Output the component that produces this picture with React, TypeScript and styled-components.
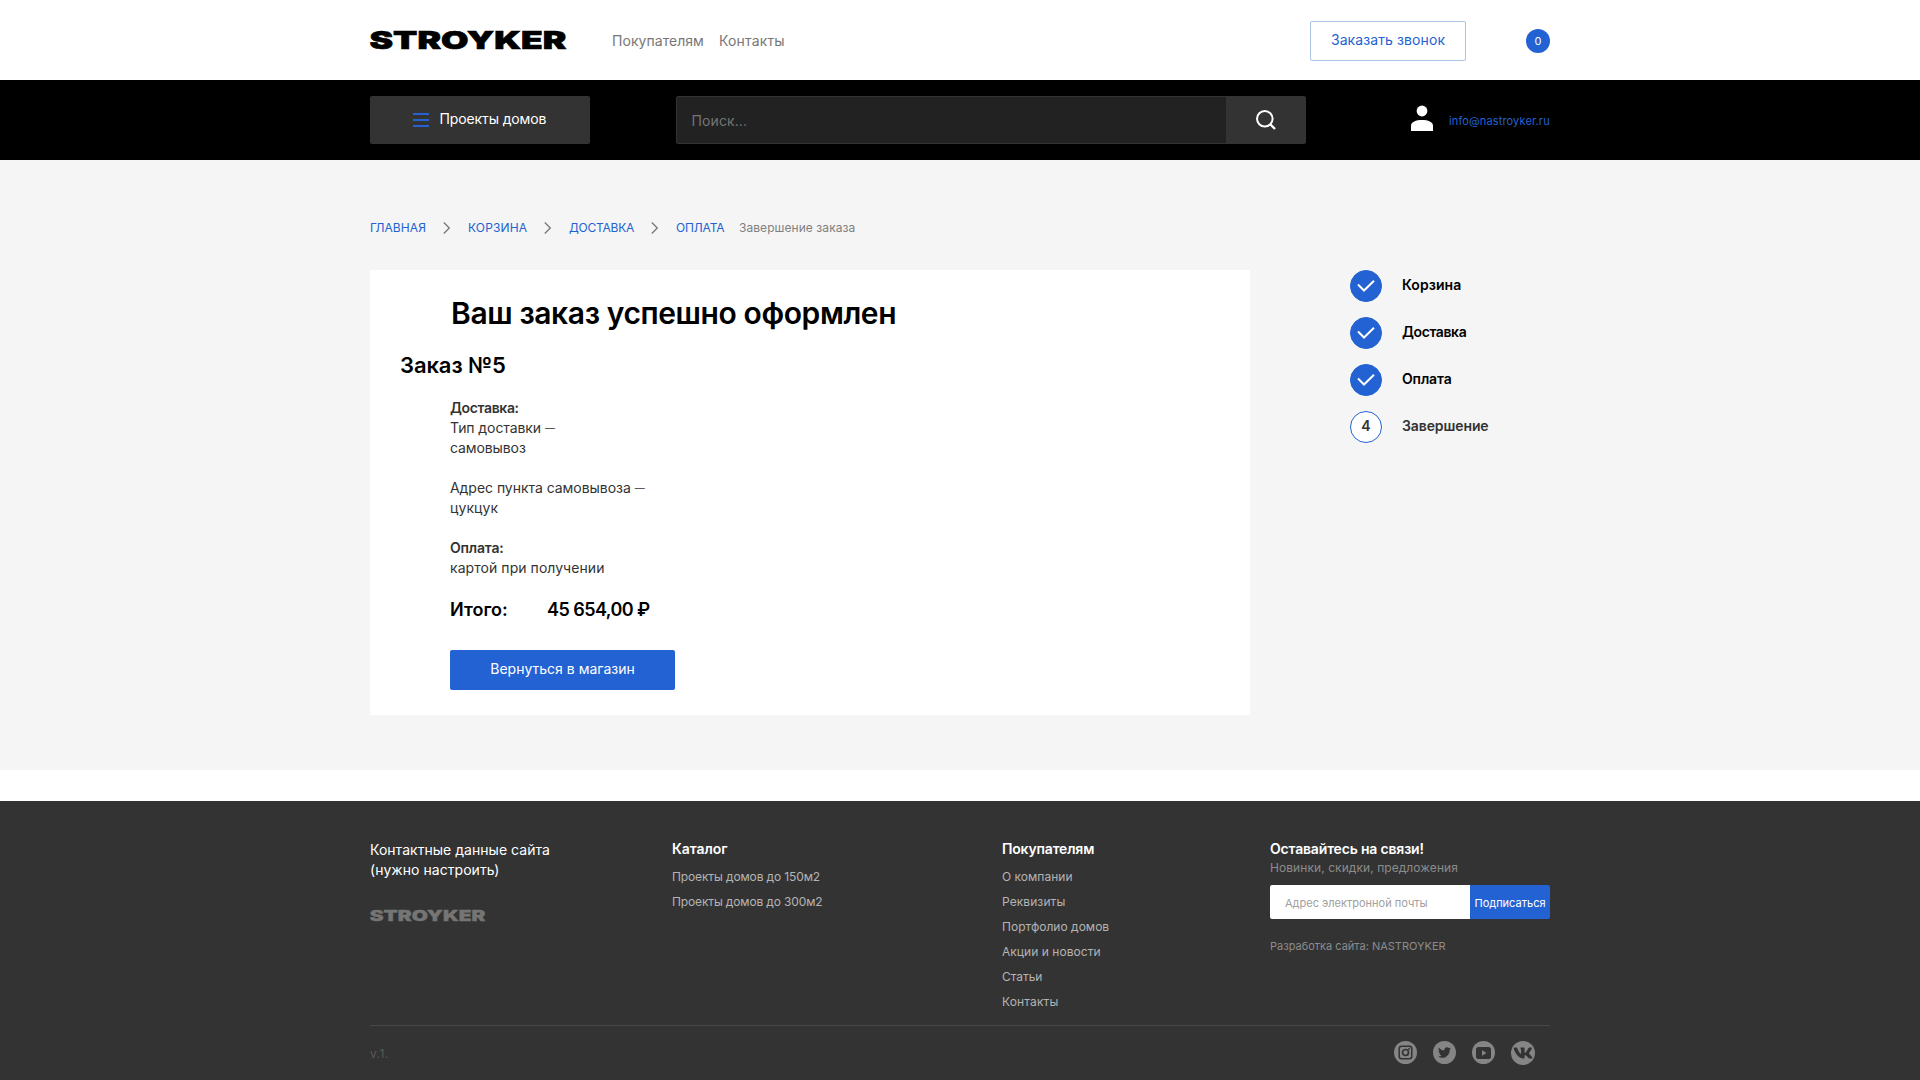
import React from 'react';
import styled, { createGlobalStyle } from 'styled-components';
import { FaTwitter, FaVk } from 'react-icons/fa';

const BLUE = '#2362d2';

const GlobalStyle = createGlobalStyle`
  * { box-sizing: border-box; }
  body { margin: 0; background: #fff; font: 400 14px/20px Inter, 'Noto Sans', sans-serif; color: #333; }
  a { color: inherit; text-decoration: none; }
  button, input { font: inherit; }
  h1, h2, h3, p, ul { margin: 0; padding: 0; list-style: none; }
`;

const Text = styled.span<{ $track?: number }>`
  letter-spacing: ${p => p.$track ?? 0}px;
  white-space: nowrap;
`;

const Page = styled.div`
  height: 1080px;
  overflow: hidden;
  display: flex;
  flex-direction: column;
`;
const Container = styled.div`
  width: 1180px;
  margin: 0 auto;
  display: flex;
`;

/* Header */
const TopRow = styled(Container)`
  height: 80px;
  padding-top: 2px;
  align-items: center;
`;
const LogoSvg = styled.svg`
  display: block;
  flex: none;
  overflow: visible;
  margin-bottom: 1px;
`;
const Nav = styled.nav`
  display: flex;
  gap: 15px;
  margin-left: 46px;
  color: #777;
`;
const CallButton = styled.button`
  width: 156px;
  height: 40px;
  margin-left: auto;
  padding: 0 0 2px;
  border: 1px solid #aac3e6;
  border-radius: 2px;
  background: #fff;
  color: ${BLUE};
`;
const CartCount = styled.span`
  width: 24px;
  height: 24px;
  margin-left: 60px;
  border-radius: 50%;
  background: ${BLUE};
  color: #fff;
  font-size: 11px;
  line-height: 24px;
  text-align: center;
`;

const Bar = styled.div`
  background: #000;
`;
const BarRow = styled(Container)`
  height: 80px;
  align-items: center;
`;
const CatalogButton = styled.button`
  display: flex;
  align-items: center;
  gap: 10.5px;
  width: 220px;
  height: 48px;
  padding: 0 0 0 43px;
  border: 0;
  border-radius: 2px;
  background: #333;
  color: #fff;
`;
const CatalogLabel = styled(Text)`
  padding-bottom: 2px;
`;
const Burger = styled.span`
  width: 16px;
  height: 14px;
  border: solid ${BLUE};
  border-width: 2px 0;
  display: flex;
  align-items: center;
  &::before { content: ''; width: 16px; height: 2px; background: ${BLUE}; }
`;
const Search = styled.form`
  display: flex;
  width: 630px;
  height: 48px;
  margin-left: 86px;
  border: 1px solid #333;
  border-radius: 2px;
  background: #333;
`;
const SearchInput = styled.input`
  width: 549px;
  padding: 2px 15px 0 14.5px;
  border: 0;
  background: #222;
  color: #fff;
  letter-spacing: 0.1px;
  outline: 0;
  &::placeholder { color: #757575; opacity: 1; }
`;
const SearchButton = styled.button`
  flex: 1;
  display: flex;
  align-items: center;
  justify-content: center;
  padding: 0 0 1px;
  border: 0;
  background: transparent;
`;
const Account = styled.a`
  display: flex;
  margin-left: 105px;
  padding-bottom: 4px;
`;
const Email = styled.a`
  margin-left: 16px;
  padding-top: 1px;
  color: ${BLUE};
  font-size: 11px;
`;

/* Main */
const Main = styled.main`
  height: 610px;
  background: #f5f5f5;
`;
const Crumbs = styled(Container)`
  height: 110px;
  padding-top: 59px;
  font-size: 12px;
  line-height: 18px;
  color: #808080;
`;
const Crumb = styled.a<{ $width: number }>`
  width: ${p => p.$width}px;
  color: ${BLUE};
`;
const Chevron = styled.svg`
  margin: 3px 17px 0 0;
  flex: none;
`;
const Columns = styled(Container)`
  align-items: flex-start;
  gap: 100px;
`;
const Card = styled.section`
  width: 880px;
  height: 445px;
  padding: 23px 0 0 80px;
  background: #fff;
`;
const Title = styled.h1`
  padding-left: 1px;
  color: #000;
  font-size: 30px;
  line-height: 40px;
  font-weight: 600;
`;
const OrderTitle = styled.h2`
  margin: 17px 0 0 -50px;
  color: #000;
  font-size: 22px;
  line-height: 30px;
  font-weight: 600;
`;
const Info = styled.div`
  display: flex;
  flex-direction: column;
  gap: 20px;
  margin-top: 18px;
`;
const InfoBlock = styled.div`
  display: flex;
  flex-direction: column;
`;
const Strong = styled(Text)`
  font-weight: 600;
`;
const Dash = styled.span`
  font-size: 10px;
  line-height: 1;
  vertical-align: 1px;
`;
const Total = styled.div`
  display: flex;
  margin-top: 19px;
  color: #000;
  font-size: 18px;
  line-height: 26px;
  font-weight: 600;
`;
const TotalLabel = styled.div`
  width: 97px;
`;
const BackButton = styled.button`
  display: block;
  width: 225px;
  height: 40px;
  margin-top: 27px;
  padding: 0 0 2px;
  border: 0;
  border-radius: 2px;
  background: ${BLUE};
  color: #fff;
`;
const Steps = styled.ul`
  display: flex;
  flex-direction: column;
  gap: 15px;
`;
const Step = styled.li<{ $current?: boolean }>`
  display: flex;
  gap: 20px;
  height: 32px;
  line-height: 30px;
  font-weight: 600;
  color: ${p => (p.$current ? '#333' : '#000')};
`;
const StepMark = styled.span<{ $current?: boolean }>`
  display: flex;
  align-items: center;
  justify-content: center;
  width: 32px;
  height: 32px;
  border: 1px solid ${BLUE};
  border-radius: 50%;
  background: ${p => (p.$current ? '#fff' : BLUE)};
  padding-bottom: ${p => (p.$current ? 2 : 0)}px;
`;

/* Footer */
const Footer = styled.footer`
  flex: 1;
  margin-top: 31px;
  background: #333;
`;
const FooterTop = styled.div`
  display: grid;
  grid-template-columns: 302px 330px 268px 280px;
  width: 1180px;
  height: 225px;
  margin: 0 auto;
  padding-top: 38px;
  border-bottom: 1px solid #484848;
`;
const Contacts = styled.div`
  display: flex;
  flex-direction: column;
  padding-top: 1px;
  color: #fff;
`;
const FooterLogo = styled.div`
  margin-top: 30px;
`;
const FooterHeading = styled.h3`
  color: #fff;
  font-size: 14px;
  line-height: 20px;
  font-weight: 600;
`;
const Links = styled.ul`
  margin-top: 5px;
  color: #b3b3b3;
  font-size: 12px;
  line-height: 25px;
`;
const Note = styled.p`
  color: #8c8c8c;
  font-size: 12px;
  line-height: 18px;
`;
const Subscribe = styled.form`
  display: flex;
  height: 34px;
  margin-top: 8px;
  border-radius: 2px;
  overflow: hidden;
`;
const EmailInput = styled.input`
  width: 200px;
  padding: 2px 10px 0 15px;
  border: 0;
  background: #fff;
  font-size: 11px;
  &::placeholder { color: #a0a0a0; opacity: 1; }
`;
const SubscribeButton = styled.button`
  width: 80px;
  padding: 2px 0 0;
  border: 0;
  background: ${BLUE};
  color: #fff;
  font-size: 11px;
`;
const Developer = styled.p`
  margin-top: 19px;
  color: #8c8c8c;
  font-size: 11px;
  line-height: 16px;
`;
const FooterBottom = styled(Container)`
  justify-content: space-between;
  padding: 15px 15px 0 0;
`;
const Version = styled.div`
  padding-top: 4px;
  color: #595959;
  font-size: 12px;
  line-height: 18px;
`;
const Social = styled.div`
  display: flex;
  gap: 16px;
`;
const SocialLink = styled.a<{ $size?: number }>`
  display: flex;
  align-items: center;
  justify-content: center;
  width: ${p => p.$size ?? 23}px;
  height: ${p => p.$size ?? 23}px;
  border-radius: 50%;
  background: #858585;
  color: #333;
`;

const Logo = ({ width, height, color }: { width: number; height: number; color: string }) => (
  <LogoSvg width={width} height={height} viewBox="0 0 196 19" preserveAspectRatio="none">
    <text x="-0.5" y="18.3" textLength="197" lengthAdjust="spacingAndGlyphs" stroke={color} strokeWidth="0.6"
      fontFamily="Inter, sans-serif" fontWeight="900" fontSize="24.5" fill={color}>STROYKER</text>
  </LogoSvg>
);

const crumbs: [string, number, number][] = [
  ['ГЛАВНАЯ', 73, 0.1],
  ['КОРЗИНА', 76, 0.16],
  ['ДОСТАВКА', 82, -0.25],
  ['ОПЛАТА', 63, -0.15],
];
const steps: [string, number][] = [['Корзина', 0.05], ['Доставка', -0.4], ['Оплата', -0.15]];
const catalog: [string, number][] = [['Проекты домов до 150м2', -0.12], ['Проекты домов до 300м2', -0.14]];
const customers: [string, number][] = [
  ['О компании', 0.02], ['Реквизиты', 0.08], ['Портфолио домов', 0.02],
  ['Акции и новости', 0.04], ['Статьи', -0.05], ['Контакты', 0.14],
];

const LinkList = ({ items }: { items: [string, number][] }) => (
  <Links>
    {items.map(([label, track]) => (
      <li key={label}><a href="#"><Text $track={track}>{label}</Text></a></li>
    ))}
  </Links>
);

export default function App() {
  return (
    <Page>
      <GlobalStyle />
      <header>
        <TopRow>
          <Logo width={196} height={19} color="#000" />
          <Nav>
            <a href="#"><Text $track={0.05}>Покупателям</Text></a>
            <a href="#"><Text $track={0.16}>Контакты</Text></a>
          </Nav>
          <CallButton><Text $track={0.1}>Заказать звонок</Text></CallButton>
          <CartCount>0</CartCount>
        </TopRow>
        <Bar>
          <BarRow>
            <CatalogButton>
              <Burger />
              <CatalogLabel $track={-0.12}>Проекты домов</CatalogLabel>
            </CatalogButton>
            <Search>
              <SearchInput placeholder="Поиск..." />
              <SearchButton type="button" aria-label="Поиск">
                <svg width="20" height="20" viewBox="0 0 20 20" fill="none" stroke="#fff" strokeWidth="2">
                  <circle cx="8.8" cy="8.8" r="7.8" />
                  <path d="M14 14l5 5" strokeWidth="2.4" />
                </svg>
              </SearchButton>
            </Search>
            <Account href="#" aria-label="Профиль">
              <svg width="22" height="26" viewBox="0 0 22 26" fill="#fff">
                <circle cx="11" cy="6" r="5.4" />
                <path d="M0 26v-5.5C0 17 5 15 11 15s11 2 11 5.500V26z" />
              </svg>
            </Account>
            <Email href="#"><Text $track={0.14}>info@nastroyker.ru</Text></Email>
          </BarRow>
        </Bar>
      </header>

      <Main>
        <Crumbs>
          {crumbs.map(([label, width, track], i) => (
            <React.Fragment key={label}>
              <Crumb href="#" $width={width}><Text $track={track}>{label}</Text></Crumb>
              {i < 3 && (
                <Chevron width="8" height="12" viewBox="0 0 8 12" fill="none" stroke="#777" strokeWidth="1.3">
                  <path d="M0.8 0.5L6.300 6L0.8 11.500" />
                </Chevron>
              )}
            </React.Fragment>
          ))}
          <Text $track={0.06}>Завершение заказа</Text>
        </Crumbs>
        <Columns>
          <Card>
            <Title><Text $track={-0.4}>Ваш заказ успешно оформлен</Text></Title>
            <OrderTitle><Text $track={-0.1}>Заказ №5</Text></OrderTitle>
            <Info>
              <InfoBlock>
                <Strong $track={-0.36}>Доставка:</Strong>
                <Text $track={-0.08}>Тип доставки <Dash>—</Dash></Text>
                <Text $track={-0.1}>самовывоз</Text>
              </InfoBlock>
              <InfoBlock>
                <Text $track={-0.04}>Адрес пункта самовывоза <Dash>—</Dash></Text>
                <Text $track={0.1}>цукцук</Text>
              </InfoBlock>
              <InfoBlock>
                <Strong $track={-0.18}>Оплата:</Strong>
                <Text $track={0.06}>картой при получении</Text>
              </InfoBlock>
            </Info>
            <Total>
              <TotalLabel><Text>Итого:</Text></TotalLabel>
              <Text $track={-0.55}>45 654,00 ₽</Text>
            </Total>
            <BackButton><Text>Вернуться в магазин</Text></BackButton>
          </Card>
          <Steps>
            {steps.map(([label, track]) => (
              <Step key={label}>
                <StepMark>
                  <svg width="18" height="12" viewBox="0 0 18 12" fill="none" stroke="#fff" strokeWidth="2">
                    <path d="M1 4.500L7 10.500L17 0.8" />
                  </svg>
                </StepMark>
                <Text $track={track}>{label}</Text>
              </Step>
            ))}
            <Step $current>
              <StepMark $current>4</StepMark>
              <Text $track={-0.1}>Завершение</Text>
            </Step>
          </Steps>
        </Columns>
      </Main>

      <Footer>
        <FooterTop>
          <Contacts>
            <Text $track={0.03}>Контактные данные сайта</Text>
            <Text $track={0.04}>(нужно настроить)</Text>
            <FooterLogo><Logo width={115} height={11} color="#757575" /></FooterLogo>
          </Contacts>
          <div>
            <FooterHeading><Text $track={-0.05}>Каталог</Text></FooterHeading>
            <LinkList items={catalog} />
          </div>
          <div>
            <FooterHeading><Text $track={-0.18}>Покупателям</Text></FooterHeading>
            <LinkList items={customers} />
          </div>
          <div>
            <FooterHeading><Text $track={-0.18}>Оставайтесь на связи!</Text></FooterHeading>
            <Note><Text $track={0.07}>Новинки, скидки, предложения</Text></Note>
            <Subscribe>
              <EmailInput placeholder="Адрес электронной почты" />
              <SubscribeButton type="button"><Text>Подписаться</Text></SubscribeButton>
            </Subscribe>
            <Developer><Text>Разработка сайта: NASTROYKER</Text></Developer>
          </div>
        </FooterTop>
        <FooterBottom>
          <Version><Text $track={0.4}>v.1.</Text></Version>
          <Social>
            <SocialLink href="#" aria-label="Instagram">
              <svg width="15" height="15" viewBox="0 0 15 15" fill="none" stroke="#333" strokeWidth="1.5">
                <rect x="1.200" y="1.200" width="12.600" height="12.600" rx="2.500" />
                <circle cx="7.500" cy="7.500" r="3" strokeWidth="1.700" />
                <circle cx="11" cy="4" r="0.900" fill="#333" stroke="none" />
              </svg>
            </SocialLink>
            <SocialLink href="#" aria-label="Twitter"><FaTwitter size={13} /></SocialLink>
            <SocialLink href="#" aria-label="YouTube">
              <svg width="15" height="12" viewBox="0 0 15 12">
                <rect width="15" height="12" rx="2.500" fill="#333" />
                <path d="M6 3.300L10.500 6L6 8.700z" fill="#858585" />
              </svg>
            </SocialLink>
            <SocialLink href="#" aria-label="VK" $size={24}><FaVk size={20} /></SocialLink>
          </Social>
        </FooterBottom>
      </Footer>
    </Page>
  );
}
